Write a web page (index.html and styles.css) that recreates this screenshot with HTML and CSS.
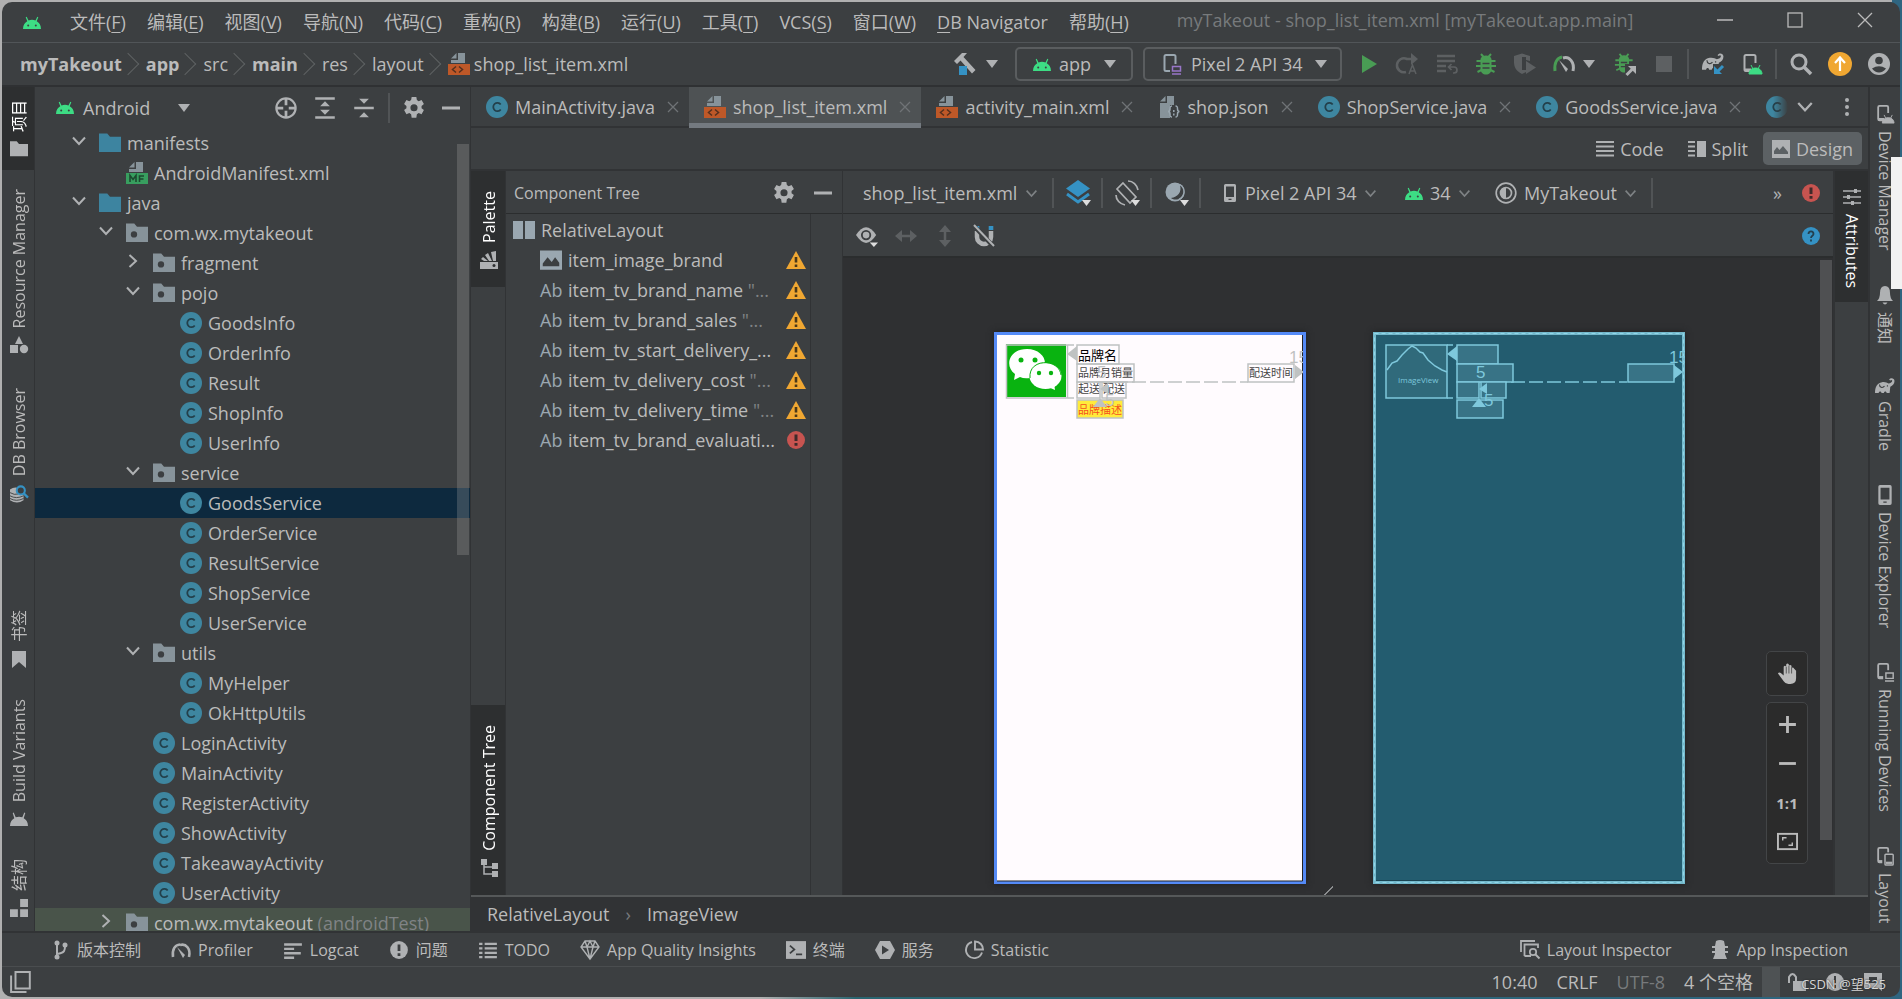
FILE: index.html
```html
<!DOCTYPE html>
<html lang="zh-CN">
<head>
  <meta charset="UTF-8">
  <meta name="viewport" content="width=device-width, initial-scale=1.0">
  <title>myTakeout - shop_list_item.xml [myTakeout.app.main]</title>
  <link rel="stylesheet" href="styles.css">
</head>
<body>
  <!-- icon sprite -->
  <svg class="sprite" aria-hidden="true">
    <symbol id="i-android" viewBox="0 0 18 13"><path fill="currentColor" d="M0 13c0-4 2-6.600 4.300-7.800L2.700 1.200l1-.5 1.800 3.800a9.500 9.500 0 0 1 7 0L14.300.7l1 .5-1.600 4C16 6.400 18 9 18 13z"/><circle cx="5.200" cy="9.500" r="1" fill="#3c3f41"/><circle cx="12.800" cy="9.500" r="1" fill="#3c3f41"/></symbol>
    <symbol id="i-folder" viewBox="0 0 16 16"><path fill="currentColor" d="M0 1h6l2 2.500h8V14.500H0z"/></symbol>
    <symbol id="i-package" viewBox="0 0 16 16"><path fill="#87939a" d="M0 1h6l2 2.500h8V14.500H0z"/><circle cx="5.800" cy="9" r="2.300" fill="#3c3f41"/></symbol>
    <symbol id="i-class" viewBox="0 0 16 16"><circle cx="8" cy="8" r="8" fill="#3e86a0"/><path d="M10.700 6.200A3 3 0 1 0 10.700 9.800" fill="none" stroke="#23404b" stroke-width="1.300"/></symbol>
    <symbol id="i-xml" viewBox="0 0 22 22"><path fill="#87939a" d="M10 0h7v10H3V7h7z"/><path fill="#87939a" d="M3 5.500 8.500 0v5.500z"/><path fill="#be5828" d="M0 11h22v11H0z"/><path d="M8 13.500 4.500 16.500 8 19.500M11 13.500l3.500 3L11 19.500" fill="none" stroke="#54301f" stroke-width="1.500"/></symbol>
    <symbol id="i-manifest" viewBox="0 0 22 22"><path fill="#87939a" d="M10 0h7v10H3V7h7z"/><path fill="#87939a" d="M3 5.500 8.500 0v5.500z"/><path fill="#389e5f" d="M0 11h22v11H0z"/><path d="M4 20v-6.500l3 4 3-4V20M13.500 20v-6h4.500M13.500 17h4" fill="none" stroke="#1d4a30" stroke-width="1.600"/></symbol>
    <symbol id="i-json" viewBox="0 0 22 22"><path fill="#87939a" d="M9 0h7v9h-4v13H2V7h7z"/><path fill="#87939a" d="M2 5.500 7.500 0v5.500z"/><path d="M14 10c-2 0-2 1-2 3s-1 2.500-2 2.500c1 0 2 .5 2 2.500s0 3 2 3M17.500 10c2 0 2 1 2 3s1 2.500 2 2.500c-1 0-2 .5-2 2.500s0 3-2 3M15.800 14v2M15.800 17.500v2" fill="none" stroke="#9aa7b0" stroke-width="1.500"/></symbol>
    <symbol id="i-down" viewBox="0 0 16 16"><path d="M2 4.500l6 6.500 6-6.500" fill="none" stroke="currentColor" stroke-width="2"/></symbol>
    <symbol id="i-tri" viewBox="0 0 12 8"><path d="M0 0h12L6 8z" fill="currentColor"/></symbol>
    <symbol id="i-close" viewBox="0 0 12 12"><path d="M1 1l10 10M11 1L1 11" stroke="currentColor" stroke-width="1.300"/></symbol>
    <symbol id="i-gear" viewBox="0 0 16 16"><path fill="currentColor" fill-rule="evenodd" d="M6.300 0h3.400l.4 2.200 1.300.8 2.100-.8 1.700 2.900-1.700 1.500v1.500l1.700 1.400-1.700 3-2.100-.8-1.300.8-.4 2.500H6.300l-.4-2.500-1.300-.8-2.100.8-1.700-3 1.700-1.400V6.600L.8 5.100l1.700-2.900 2.100.8 1.300-.8zM8 5.200a2.600 2.600 0 1 0 0 5.200 2.600 2.600 0 0 0 0-5.200z"/></symbol>
    <symbol id="i-minus" viewBox="0 0 16 16"><path d="M0 8h16" stroke="currentColor" stroke-width="2.500"/></symbol>
    <symbol id="i-target" viewBox="0 0 16 16"><circle cx="8" cy="8" r="7" fill="none" stroke="currentColor" stroke-width="1.600"/><path d="M8 1v5M8 10v5M1 8h5M10 8h5" stroke="currentColor" stroke-width="2"/></symbol>
    <symbol id="i-expand" viewBox="0 0 16 18"><path d="M0 1.200h16M0 16.800h16" stroke="currentColor" stroke-width="2"/><path d="M8 3.500l4 4H4zM8 14.500l4-4H4z" fill="currentColor"/></symbol>
    <symbol id="i-collapse" viewBox="0 0 16 18"><path d="M0 9h16" stroke="currentColor" stroke-width="2"/><path d="M8 5.500l4-4H4zM8 12.500l4 4H4z" fill="currentColor"/></symbol>
    <symbol id="i-warn" viewBox="0 0 20 18"><path d="M10 0l10 18H0z" fill="#f0a732"/><path d="M10 6v5.500M10 13.500v2.500" stroke="#4a3818" stroke-width="2.600"/></symbol>
    <symbol id="i-error" viewBox="0 0 18 18"><circle cx="9" cy="9" r="9" fill="#c75450"/><path d="M9 3.500v6.500M9 12v2.800" stroke="#3f2a2a" stroke-width="3"/></symbol>
    <symbol id="i-image" viewBox="0 0 16 16"><path fill="currentColor" fill-rule="evenodd" d="M0 1h16v14H0zM2 12.500h12v-2.500L11 6 8.500 9.500 5.500 6 2 10.500z"/></symbol>
    <symbol id="i-phone" viewBox="0 0 12 18"><path fill="currentColor" fill-rule="evenodd" d="M1.500 0h9q1.500 0 1.500 1.500v15q0 1.500-1.500 1.500h-9Q0 18 0 16.500v-15Q0 0 1.500 0zM2 2.500v10.500h8V2.500zM4.500 14.800v1.200h3v-1.200z"/></symbol>
    <symbol id="i-device" viewBox="0 0 20 22"><path d="M12 18H4q-1.500 0-1.500-1.500v-13Q2.500 2 4 2h8q1.500 0 1.500 1.500V10" fill="none" stroke="currentColor" stroke-width="2"/><path d="M3 17h6" stroke="currentColor" stroke-width="3"/></symbol>
    <symbol id="i-elephant" viewBox="0 0 20 16"><path fill="currentColor" d="M0 15C0 9 2 5 7 4.200c3-.5 5 .6 6.500 1.200 2-.2 3.700-1.400 3.700-2.700 0-.9-1.400-1-1.900-.1l-1.200-.8c1.600-2.700 5.300-1.600 5.400 1.200 0 3-1.900 4.700-4.200 5.700-.2 2-.5 4.300-.7 6.300h-3c0-2-2.500-2-2.700 0H6.500c-.2-2-2.600-2-2.800 0z"/><path d="M4.500 6.500c0 3 3 4 5 1.700M12 7.500l.8.800" fill="none" stroke="#3c3f41" stroke-width="1.100"/></symbol>
    <symbol id="i-bug" viewBox="0 0 20 22"><path d="M5 1l3 3.500M15 1l-3 3.500M0.500 8h19M0 13h20M1.500 19l4-2M18.500 19l-4-2" stroke="#499c54" stroke-width="2"/><path d="M4.500 6c1-2.800 3-3.500 5.500-3.500S14.500 3.200 15.500 6v10c0 3.500-2.500 5.500-5.500 5.500S4.500 19.500 4.500 16z" fill="#499c54"/><path d="M6.500 10.500h7M6.500 15h7" stroke="#3c3f41" stroke-width="1.500"/></symbol>
  </svg>

  <div class="window">
    <header class="menubar">
      <svg class="green android"><use href="#i-android"/></svg>
      <nav class="menus">
        <button>文件(<u>F</u>)</button>
        <button>编辑(<u>E</u>)</button>
        <button>视图(<u>V</u>)</button>
        <button>导航(<u>N</u>)</button>
        <button>代码(<u>C</u>)</button>
        <button>重构(<u>R</u>)</button>
        <button>构建(<u>B</u>)</button>
        <button>运行(<u>U</u>)</button>
        <button>工具(<u>T</u>)</button>
        <button>VCS(<u>S</u>)</button>
        <button>窗口(<u>W</u>)</button>
        <button><u>D</u>B Navigator</button>
        <button>帮助(<u>H</u>)</button>
      </nav>
      <div class="window-title">myTakeout - shop_list_item.xml [myTakeout.app.main]</div>
      <div class="window-buttons">
        <button aria-label="最小化"><svg viewBox="0 0 16 16"><path d="M0 8h16" stroke="currentColor" stroke-width="1.500"/></svg></button>
        <button aria-label="最大化"><svg viewBox="0 0 16 16"><rect x="1" y="1" width="14" height="14" fill="none" stroke="currentColor" stroke-width="1.300"/></svg></button>
        <button aria-label="关闭"><svg viewBox="0 0 16 16"><path d="M1 1l14 14M15 1L1 15" stroke="currentColor" stroke-width="1.300"/></svg></button>
      </div>
    </header>

    <div class="navbar">
      <div class="crumbs">
        <b>myTakeout</b><i></i><b>app</b><i></i><span>src</span><i></i><b>main</b><i></i><span>res</span><i></i><span>layout</span><i></i>
        <svg class="icon file"><use href="#i-xml"/></svg><span class="crumb-file">shop_list_item.xml</span>
      </div>
      <div class="run-bar">
        <button class="build" aria-label="构建">
          <svg class="icon" viewBox="0 0 22 22"><path d="M0 8L8 0h5L9.500 4l12 13-3.500 3.500L6.500 7.500 3 11z" fill="currentColor"/><path d="M5 13h8v9H5z" fill="#3592c4"/></svg>
          <svg class="tri"><use href="#i-tri"/></svg>
        </button>
        <div class="combo combo-app">
          <svg class="green android"><use href="#i-android"/></svg>
          <select aria-label="运行配置"><option>app</option></select>
          <svg class="tri"><use href="#i-tri"/></svg>
        </div>
        <div class="combo">
          <svg class="icon" viewBox="0 0 20 22"><path d="M8 18H4q-1.500 0-1.500-1.500v-13Q2.500 2 4 2h8q1.500 0 1.500 1.500V11" fill="none" stroke="#9aa7b0" stroke-width="2"/><path d="M10.500 13.500h8v4.500h-8zM10 21h9" fill="none" stroke="#9876c8" stroke-width="1.500"/></svg>
          <select aria-label="设备"><option>Pixel 2 API 34</option></select>
          <svg class="tri"><use href="#i-tri"/></svg>
        </div>
        <div class="run-icons">
          <button aria-label="运行"><svg viewBox="0 0 22 22"><path d="M4 2l15 9-15 9z" fill="#499c54"/></svg></button>
          <button class="off" aria-label="应用更改"><svg viewBox="0 0 22 22"><path d="M9 19A7 7 0 1 1 10 6h6" fill="none" stroke="currentColor" stroke-width="2.500"/><path d="M14 0l7 6-7 6z" fill="currentColor"/><path d="M12 21l3.500-9 3.500 9M13 18h5" fill="none" stroke="currentColor" stroke-width="1.500"/></svg></button>
          <button class="off" aria-label="应用代码更改"><svg viewBox="0 0 22 22"><path d="M1 3h18M1 8h18M1 13h9M1 18h9" stroke="currentColor" stroke-width="2.500"/><path d="M13 14h5a3 3 0 0 1 0 6h-1M15.500 11l-3 3 3 3" fill="none" stroke="currentColor" stroke-width="1.700"/></svg></button>
          <button aria-label="调试"><svg><use href="#i-bug"/></svg></button>
          <button class="off" aria-label="覆盖率"><svg viewBox="0 0 22 22"><path d="M0 3l8-2.500L16 3v5l-4-1v12l-4 2C2 18 0 14 0 9z" fill="currentColor"/><path d="M8 4h4v13H8z" fill="#3c3f41"/><path d="M12 8l10 6.500L12 21z" fill="currentColor"/></svg></button>
          <button aria-label="性能分析"><svg viewBox="0 0 22 18"><path d="M2 16C1 8 4 3 9 2" fill="none" stroke="#499c54" stroke-width="3"/><path d="M10 3c6-2 12 4 10 13" fill="none" stroke="currentColor" stroke-width="3"/><path d="M6 5l9 9-2 3z" fill="currentColor"/></svg></button>
          <svg class="tri"><use href="#i-tri"/></svg>
          <button aria-label="附加调试器"><svg viewBox="0 0 22 22"><use href="#i-bug" width="20" height="20"/><path d="M11 11h11v11H11z" fill="#3c3f41"/><path d="M14 13h8v8z" fill="currentColor"/><path d="M12.500 22l7-7" stroke="currentColor" stroke-width="3"/></svg></button>
          <button class="off" aria-label="停止"><svg viewBox="0 0 22 22"><path d="M3 3h16v16H3z" fill="currentColor"/></svg></button>
          <span class="bar"></span>
          <button aria-label="同步 Gradle"><svg viewBox="0 0 22 22"><use href="#i-elephant" width="22" height="18"/><path d="M11 11h11v11H11z" fill="#3c3f41"/><path d="M12 21v-8l8 8z" fill="#3592c4"/><path d="M14 20l7-7" stroke="#3592c4" stroke-width="3"/></svg></button>
          <button aria-label="设备管理器"><svg viewBox="0 0 20 22"><use href="#i-device"/><path d="M7 21c0-8 13-8 13 0zM9 12l2 4M18 12l-2 4" fill="#3ddc84" stroke="#3ddc84"/></svg></button>
          <span class="bar"></span>
          <button aria-label="搜索"><svg viewBox="0 0 22 22"><circle cx="9" cy="9" r="7" fill="none" stroke="currentColor" stroke-width="3"/><path d="M14 14l7 7" stroke="currentColor" stroke-width="3.500"/></svg></button>
          <button aria-label="更新"><svg class="big" viewBox="0 0 24 24"><circle cx="12" cy="12" r="12" fill="#f0a732"/><path d="M12 19V7M7 11l5-5.500 5 5.500" fill="none" stroke="#fff" stroke-width="2.200"/></svg></button>
          <button aria-label="账户"><svg viewBox="0 0 22 22"><circle cx="11" cy="11" r="11" fill="currentColor"/><circle cx="11" cy="7.500" r="3.800" fill="#3c3f41"/><path d="M4 15.500q7-4.500 14 0-3 4-7 4t-7-4z" fill="#3c3f41"/></svg></button>
        </div>
      </div>
    </div>

    <main class="main">
      <aside class="stripe stripe-left">
        <div class="stripe-group">
          <button class="active"><span>项目</span><svg><use href="#i-folder"/></svg></button>
          <button><span>Resource Manager</span><svg viewBox="0 0 18 18"><path d="M9 0l4 8H5zM0 9h8v8H0z" fill="currentColor"/><circle cx="14" cy="13" r="4.200" fill="currentColor"/></svg></button>
          <button><span>DB Browser</span><svg viewBox="0 0 20 20"><path d="M0 5q4-3 8-2v5l4 3h3v6q-7 5-15 0z" fill="currentColor"/><path d="M0 8.500q5 3 9 1.500M0 12q7 4 15 0M0 15q7 4 15 0" fill="none" stroke="#3c3f41"/><circle cx="12" cy="6" r="4.500" fill="#3c3f41" stroke="#3592c4" stroke-width="2.300"/><path d="M15 9l5 5" stroke="#3592c4" stroke-width="2.500"/></svg></button>
        </div>
        <div class="stripe-group">
          <button><span>书签</span><svg viewBox="0 0 16 18"><path d="M1 1h14v17l-7-6-7 6z" fill="currentColor"/></svg></button>
          <button><span>Build Variants</span><svg viewBox="0 0 18 14"><path d="M0 14c0-4 2-6.600 4.300-7.800L2.700 1l1-.5 2 4.800a9.500 9.500 0 0 1 6.600 0L14.300.5l1 .5-1.600 5.200C16 7.400 18 10 18 14z" fill="currentColor"/></svg></button>
          <button><span>结构</span><svg viewBox="0 0 16 16"><path d="M9 0h7v7H9zM0 9h7v7H0zM9 9h7v7H9z" fill="currentColor"/></svg></button>
        </div>
      </aside>

      <section class="project">
        <div class="project-head">
          <svg class="green android"><use href="#i-android"/></svg>
          <button class="project-view">Android <svg class="tri"><use href="#i-tri"/></svg></button>
          <div class="project-tools">
            <button aria-label="定位"><svg class="icon"><use href="#i-target"/></svg></button>
            <button aria-label="全部展开"><svg class="icon"><use href="#i-expand"/></svg></button>
            <button aria-label="全部折叠"><svg class="icon"><use href="#i-collapse"/></svg></button>
            <span class="bar"></span>
            <button aria-label="设置"><svg class="icon"><use href="#i-gear"/></svg></button>
            <button aria-label="隐藏"><svg class="icon small"><use href="#i-minus"/></svg></button>
          </div>
        </div>
        <div class="tree" id="tree"></div>
        <div class="scroll-thumb tree-thumb"></div>
      </section>

      <section class="editor">
        <div class="tabs">
          <div class="tab-list" id="tabs"></div>
          <button class="tab-more" aria-label="更多标签"><svg class="icon small"><use href="#i-down"/></svg></button>
          <button class="tab-more" aria-label="选项"><svg class="dots" viewBox="0 0 4 20"><circle cx="2" cy="3" r="2"/><circle cx="2" cy="10" r="2"/><circle cx="2" cy="17" r="2"/></svg></button>
        </div>
        <div class="modes">
          <button><svg viewBox="0 0 18 18"><path d="M0 2h18M0 6.500h18M0 11h18M0 15.500h18" stroke="currentColor" stroke-width="2"/></svg>Code</button>
          <button><svg viewBox="0 0 18 18"><path d="M0 2h7M0 6.500h7M0 11h7M0 15.500h7" stroke="currentColor" stroke-width="2"/><path d="M9 1h9v16H9z" fill="currentColor"/></svg>Split</button>
          <button class="active"><svg viewBox="0 0 18 18"><path d="M0 0h18v18H0z" fill="currentColor"/><path d="M2 14V11l3-4 2.500 3L11 6l5 6v2z" fill="#5c6164"/></svg>Design</button>
        </div>

        <div class="designer">
          <aside class="stripe stripe-palette">
            <button class="active"><span>Palette</span><svg viewBox="0 0 18 18"><path d="M0 11h18v7H0zM1 8l2-2 5 4H4zM5 4l3-2 4 8H9zM11 1l5-1v10h-3z" fill="currentColor"/><circle cx="14" cy="14.500" r="1.500" fill="#2d2f30"/></svg></button>
            <button class="active"><span>Component Tree</span><svg viewBox="0 0 18 18"><path d="M1 0h6v6H1zM12 4h6v6h-6zM12 12h6v6h-6z" fill="currentColor"/><path d="M4 4v11h9M4 8h9" fill="none" stroke="currentColor" stroke-width="1.500"/></svg></button>
          </aside>

          <div class="components">
            <div class="components-head">
              <span>Component Tree</span>
              <button aria-label="设置"><svg class="icon"><use href="#i-gear"/></svg></button>
              <button aria-label="隐藏"><svg class="icon small"><use href="#i-minus"/></svg></button>
            </div>
            <div class="component-list" id="components"></div>
          </div>

          <div class="surface">
            <div class="surface-bar">
              <div class="pick"><select aria-label="布局文件"><option>shop_list_item.xml</option></select><svg><use href="#i-down"/></svg></div>
              <span class="bar"></span>
              <button aria-label="图层"><svg viewBox="0 0 26 26"><path d="M13 0l12 8.500L13 17 1 8.500z" fill="#3592c4"/><path d="M2 14l11 8 11-8" fill="none" stroke="#3592c4" stroke-width="3"/><path d="M17 20h9l-4.500 6z" fill="#ddd"/></svg></button>
              <span class="bar"></span>
              <button aria-label="方向"><svg viewBox="0 0 26 26"><path d="M9 3l13 14-6 6L3 9z" fill="none" stroke="currentColor" stroke-width="1.700"/><path d="M14 1c5 0 9 4 10 9M2 15c0 5 4 9 9 10" fill="none" stroke="currentColor" stroke-width="1.700"/><path d="M17 20h9l-4.500 6z" fill="#ddd"/></svg></button>
              <span class="bar"></span>
              <button aria-label="夜间模式"><svg viewBox="0 0 26 26"><circle cx="12" cy="12" r="9.500" fill="#9aa7b0"/><path d="M17 5c2 7-2 12-9 13 5 4 13 0 13-6 0-3-2-6-4-7z" fill="#3c3f41"/><path d="M17 4.500c6 4 5 12-1 15" fill="none" stroke="#9aa7b0" stroke-width="1.500"/><path d="M17 20h9l-4.500 6z" fill="#ddd"/></svg></button>
              <span class="bar"></span>
              <div class="pick"><svg class="lead-phone"><use href="#i-phone"/></svg><select aria-label="预览设备"><option>Pixel 2 API 34</option></select><svg><use href="#i-down"/></svg></div>
              <div class="pick"><svg class="green android"><use href="#i-android"/></svg><select aria-label="API 版本"><option>34</option></select><svg><use href="#i-down"/></svg></div>
              <div class="pick theme"><svg class="icon" viewBox="0 0 22 22"><circle cx="11" cy="11" r="9.800" fill="none" stroke="currentColor" stroke-width="1.700"/><circle cx="11" cy="11" r="5.500" fill="none" stroke="currentColor" stroke-width="1.700"/><path d="M11 5.500v11a5.500 5.500 0 0 1 0-11z" fill="currentColor"/></svg><select aria-label="主题"><option>MyTakeout</option></select><svg><use href="#i-down"/></svg></div>
              <span class="bar"></span>
              <span class="more">»</span>
              <svg class="status-icon"><use href="#i-error"/></svg>
            </div>
            <div class="surface-bar second">
              <button aria-label="视图选项"><svg viewBox="0 0 24 24"><path d="M0 11q11-17 22 0-11 17-22 0z" fill="currentColor"/><circle cx="11" cy="11" r="4.600" fill="none" stroke="#3c3f41" stroke-width="2"/><path d="M15 19h9l-4.500 5z" fill="#ddd"/></svg></button>
              <button class="off" aria-label="水平"><svg viewBox="0 0 22 22"><path d="M5 11h12" stroke="currentColor" stroke-width="2.500"/><path d="M7 5v12l-7-6zM15 5v12l7-6z" fill="currentColor"/></svg></button>
              <button class="off" aria-label="垂直"><svg viewBox="0 0 22 22"><path d="M11 5v12" stroke="currentColor" stroke-width="2.500"/><path d="M5 7h12l-6-7zM5 15h12l-6 7z" fill="currentColor"/></svg></button>
              <button aria-label="自动连接"><svg viewBox="0 0 22 22"><path d="M4 6v6a7 7 0 0 0 14 0V6" fill="none" stroke="currentColor" stroke-width="4.500"/><path d="M15.700 1h4.600v4h-4.600zM1.700 1h4.600v4H1.700z" fill="#3592c4"/><path d="M0 0l21 22" stroke="#3c3f41" stroke-width="4.500"/><path d="M1 0l20 21" stroke="currentColor" stroke-width="2"/></svg></button>
              <svg class="status-icon help" viewBox="0 0 18 18"><circle cx="9" cy="9" r="9" fill="#3592c4"/><path d="M6.500 7c0-3.500 5-3.500 5 0 0 1.800-2.500 1.800-2.500 4M9 12.500v2" fill="none" stroke="#23404f" stroke-width="1.800"/></svg>
            </div>
            <div class="canvas">
              <!-- design preview -->
              <svg class="screen design" viewBox="0 0 312 552">
                <rect x="1.500" y="1.500" width="309" height="549" fill="#fffbfe" stroke="#548af7" stroke-width="3"/>
                <path d="M308.500 3v546H3" fill="none" stroke="#222"/>
                <rect x="12" y="12" width="60" height="53" fill="#09b310"/>
                <path fill="#fff" d="M33 17c11 0 18 7 18 14-9 1-16 7-15 15q-6 1-10-1l-6 3 1-6C10 34 15 17 33 17z"/>
                <ellipse cx="51.500" cy="44" rx="16" ry="13" fill="#fff"/><path d="M54 55l7 3-1-7z" fill="#fff"/>
                <path d="M36 46c-2-20 29-20 31-3" fill="none" stroke="#09b310" stroke-width="1"/>
                <g fill="#09b310"><circle cx="27" cy="28" r="2.500"/><circle cx="41" cy="28" r="2.500"/><circle cx="45" cy="41" r="2.200"/><circle cx="57" cy="41" r="2.200"/></g>
                <rect x="83" y="68" width="46" height="18" fill="#ffeb3b"/>
                <g class="design-text">
                  <text class="lg" x="84" y="28">品牌名</text>
                  <text x="84" y="45">品牌月销量</text>
                  <text x="84" y="61">起送</text>
                  <text x="109" y="61">配送</text>
                  <text class="hot" x="84" y="82">品牌描述</text>
                  <text x="255" y="45">配送时间</text>
                </g>
                <g fill="none" stroke="#bfc2c2" stroke-width="1.500">
                  <rect x="12.500" y="13" width="61" height="53"/>
                  <path d="M74 13h6M74 66h6M102 50h152" stroke-dasharray="14 4"/>
                  <rect x="83" y="13" width="42" height="19"/><rect x="83" y="32" width="57" height="18"/>
                  <rect x="83" y="50" width="23" height="16"/><rect x="108" y="50" width="24" height="16"/>
                  <rect x="83" y="68" width="46" height="18"/><rect x="254" y="32" width="46" height="18"/>
                </g>
                <g fill="#bfc2c2"><path d="M73 22l10-8v15zM106 57l8-6v11zM99 75l7-9 7 9zM301 33l9 7-9 7z"/>
                  <text class="gap" x="103" y="46">5</text><text class="gap" x="111" y="74">5</text><text class="gap" x="295" y="31">15</text></g>
                <path d="M310.500 0v552" stroke="#548af7" stroke-width="3"/>
              </svg>
              <!-- blueprint preview -->
              <svg class="screen blueprint" viewBox="0 0 312 552">
                <rect x="1.500" y="1.500" width="309" height="549" fill="#235c6f" stroke="#74b9cc" stroke-width="3"/>
                <rect x="1.500" y="1.500" width="309" height="549" fill="none" stroke="#91d6e8" stroke-dasharray="4 3"/>
                <path d="M3 548.500h306" stroke="#1a4554"/>
                <g fill="#387386" stroke="#7ec8dc" stroke-width="1.500">
                  <rect x="13" y="13" width="61" height="53" fill="#306a7b"/>
                  <path d="M14 38l5-7 5-2 5-6 6-6 4-3 4 2 4 4 3 1 5 7 7 6 7 4 5 2"  fill="none"/>
                  <path d="M74 13h6M74 66h6M102 50h152" stroke-dasharray="14 4"/>
                  <rect x="84" y="13" width="41" height="19"/><rect x="84" y="32" width="56" height="18"/>
                  <rect x="84" y="50" width="22" height="16"/><rect x="108" y="50" width="25" height="16"/>
                  <rect x="84" y="68" width="46" height="18"/><rect x="255" y="32" width="46" height="18"/>
                </g>
                <g fill="#7ec8dc"><path d="M74 22l10-8v15zM106 57l8-6v11zM99 75l7-9 7 9zM301 33l9 7-9 7z"/>
                  <text class="tiny" x="25" y="51">ImageView</text>
                  <text class="gap" x="103" y="46">5</text><text class="gap" x="111" y="74">5</text><text class="gap" x="296" y="31">15</text></g>
              </svg>
              <div class="resize-grip"></div>
              <div class="zoom">
                <div class="zoom-box"><button aria-label="平移"><svg viewBox="0 0 20 22"><path d="M6 13V4q1.300-2 2.600 0V1.500q1.400-2 2.800 0V3q1.500-2 2.800 0v2.500q1.400-2 2.800.5L19 8v8q0 6-6 6h-2q-3 0-5-3l-6-8q1-2 3-.5z" fill="currentColor"/><path d="M8.700 4v7M11.500 3v8M14.300 5v6" stroke="#2b2b2b" stroke-width=".7"/></svg></button></div>
                <div class="zoom-box">
                  <button aria-label="放大"><svg viewBox="0 0 20 20"><path d="M2 10h16M10 2v16" stroke="currentColor" stroke-width="2.700"/></svg></button>
                  <button aria-label="缩小"><svg viewBox="0 0 20 20"><path d="M2 10h16" stroke="currentColor" stroke-width="2.700"/></svg></button>
                  <button>1:1</button>
                  <button aria-label="适应屏幕"><svg viewBox="0 0 22 20"><rect x="1" y="2" width="20" height="16" fill="none" stroke="currentColor" stroke-width="2"/><path d="M6 9V6h4M16 11v3h-4" fill="none" stroke="currentColor" stroke-width="1.500"/></svg></button>
                </div>
              </div>
              <div class="scroll-thumb canvas-thumb"></div>
            </div>
          </div>

          <aside class="stripe stripe-attributes">
            <button class="active"><svg viewBox="0 0 18 18"><path d="M0 3h18M0 9h18M0 15h18" stroke="currentColor" stroke-width="1.700"/><path d="M11 1h3v4h-3zM4 7h3v4H4zM8 13h3v4H8z" fill="currentColor"/></svg><span>Attributes</span></button>
          </aside>
        </div>
        <div class="path-bar"><span>RelativeLayout</span><i>›</i><span>ImageView</span></div>
      </section>

      <aside class="stripe stripe-right">
        <button><svg viewBox="0 0 20 22"><use href="#i-device"/><path d="M7 21c0-8 13-8 13 0zM9 12l2 4M18 12l-2 4" fill="currentColor" stroke="currentColor"/></svg><span>Device Manager</span></button>
        <button><svg viewBox="0 0 18 20"><path d="M1 16q3-3 3-8 0-7 5-7t5 7q0 5 3 8zM6.500 17.500h5q-2.500 4-5 0z" fill="currentColor"/></svg><span>通知</span></button>
        <button><svg class="flat"><use href="#i-elephant"/></svg><span>Gradle</span></button>
        <button><svg><use href="#i-phone"/></svg><span>Device Explorer</span></button>
        <button><svg viewBox="0 0 20 22"><use href="#i-device"/><path d="M8 9h12v13H8z" fill="#3c3f41"/><path d="M11 12h8v6h-8zM10 21h10" fill="none" stroke="currentColor" stroke-width="1.600"/></svg><span>Running Devices</span></button>
        <button><svg viewBox="0 0 20 22"><use href="#i-device"/><path d="M7 7h13v15H7z" fill="#3c3f41"/><rect x="10" y="9" width="9" height="12" rx="1" fill="none" stroke="currentColor" stroke-width="1.600"/><path d="M11 18.500h7" stroke="currentColor" stroke-width="2.500"/></svg><span>Layout</span></button>
      </aside>
    </main>

    <div class="toolstrip">
      <button><svg viewBox="0 0 18 20"><path d="M6 3v14M6 14c8-1 8-4 8-8" fill="none" stroke="currentColor" stroke-width="2"/><circle cx="6" cy="3" r="2.500"/><circle cx="6" cy="17" r="2.500"/><circle cx="14" cy="5" r="2.500"/></svg>版本控制</button>
      <button><svg viewBox="0 0 20 18"><path d="M2 16C1 8 4 4 9 3.500M9 4c6-2 11 4 9 12" fill="none" stroke="currentColor" stroke-width="2.600"/><path d="M6 6l8 8-2 3z"/></svg>Profiler</button>
      <button><svg viewBox="0 0 18 18"><path d="M1 4h16M1 8h9M1 12h15M1 16h9" stroke="currentColor" stroke-width="2.200"/></svg>Logcat</button>
      <button><svg viewBox="0 0 18 18"><circle cx="9" cy="9" r="8"/><path d="M9 4v6M9 12v2.500" stroke="#3c3f41" stroke-width="2.500"/></svg>问题</button>
      <button><svg viewBox="0 0 18 18"><path d="M1 3.500h3M1 7.500h3M1 11.500h3M1 15.500h3M6 3.500h11M6 7.500h11M6 11.500h11M6 15.500h11" stroke="currentColor" stroke-width="2"/></svg>TODO</button>
      <button><svg viewBox="0 0 20 20"><path d="M5 1h10l4 6-9 12L1 7zM1 7h18M5 1l2 6 3 12 3-12 2-6M7 7l3-6 3 6" fill="none" stroke="currentColor" stroke-width="1.400"/></svg>App Quality Insights</button>
      <button><svg viewBox="0 0 18 18"><path d="M0 1h18v16H0z"/><path d="M3.500 5l4 3.500-4 3.500M9 13h5.500" fill="none" stroke="#3c3f41" stroke-width="1.600"/></svg>终端</button>
      <button><svg viewBox="0 0 20 18"><path d="M5 0h10l5 9-5 9H5L0 9z"/><path d="M7 4.500l7 4.500-7 4.500z" fill="#3c3f41"/></svg>服务</button>
      <button><svg viewBox="0 0 20 20"><path d="M8 2a8.200 8.200 0 1 0 10 10.500M11 1.500c5 0 8 4 8 8h-8z" fill="none" stroke="currentColor" stroke-width="1.900"/></svg>Statistic</button>
      <span class="fill"></span>
      <button class="right"><svg viewBox="0 0 20 20"><path d="M1 12V1h14M4.500 16V4.500H18V8M11 16H4.500" fill="none" stroke="currentColor" stroke-width="1.800"/><circle cx="13" cy="12" r="3.200" fill="none" stroke="currentColor" stroke-width="1.700"/><path d="M15 14l4.500 4.500" stroke="currentColor" stroke-width="2"/></svg>Layout Inspector</button>
      <button class="right"><svg viewBox="0 0 20 20"><path d="M6 1q4-2 8 0l1 5v8l2 5H3l2-5V6z"/><path d="M2 7h16M2 12h16" stroke="currentColor" stroke-width="1.800"/></svg>App Inspection</button>
    </div>

    <footer class="statusbar">
      <button aria-label="工具窗口"><svg class="icon" viewBox="0 0 20 20"><path d="M5 1h13v15H5zM1 4v15h14" fill="none" stroke="currentColor" stroke-width="1.800"/></svg></button>
      <span class="fill"></span>
      <span>10:40</span><span>CRLF</span><span class="dim">UTF-8</span><span>4 个空格</span>
      <div class="memory"></div>
      <div class="status-icons">
        <svg viewBox="0 0 20 20"><path d="M2 11V5q3.500-6 7 0v4" fill="none" stroke="currentColor" stroke-width="2"/><path d="M6 9h13v10H6z" fill="currentColor"/></svg>
        <svg viewBox="0 0 20 20"><circle cx="10" cy="10" r="9" fill="currentColor"/><path d="M10 4v7M10 13v3" stroke="#3c3f41" stroke-width="2"/></svg>
        <svg viewBox="0 0 20 20"><path d="M1 1h18v18l-4-3H1z" fill="currentColor"/><path d="M6 5h8v6H6z" fill="#3c3f41"/></svg>
        <span class="watermark">CSDN @望525</span>
      </div>
    </footer>
  </div>
  <div class="edge-panel"></div>

  <script>
    // [level, icon, name, arrow, note]
    const treeData = [
      [1, "folder", "manifests", "open"],
      [2, "manifest", "AndroidManifest.xml"],
      [1, "folder", "java", "open"],
      [2, "package", "com.wx.mytakeout", "open"],
      [3, "package", "fragment", "closed"],
      [3, "package", "pojo", "open"],
      [4, "class", "GoodsInfo"],
      [4, "class", "OrderInfo"],
      [4, "class", "Result"],
      [4, "class", "ShopInfo"],
      [4, "class", "UserInfo"],
      [3, "package", "service", "open"],
      [4, "class", "GoodsService"],
      [4, "class", "OrderService"],
      [4, "class", "ResultService"],
      [4, "class", "ShopService"],
      [4, "class", "UserService"],
      [3, "package", "utils", "open"],
      [4, "class", "MyHelper"],
      [4, "class", "OkHttpUtils"],
      [3, "class", "LoginActivity"],
      [3, "class", "MainActivity"],
      [3, "class", "RegisterActivity"],
      [3, "class", "ShowActivity"],
      [3, "class", "TakeawayActivity"],
      [3, "class", "UserActivity"],
      [2, "package", "com.wx.mytakeout", "closed", "(androidTest)"]
    ];

    const tabData = [
      ["class", "MainActivity.java"],
      ["xml", "shop_list_item.xml"],
      ["xml", "activity_main.xml"],
      ["json", "shop.json"],
      ["class", "ShopService.java"],
      ["class", "GoodsService.java"]
    ];

    const componentData = [
      ["image", "item_image_brand", "", "warn"],
      ["Ab", "item_tv_brand_name", "\"...", "warn"],
      ["Ab", "item_tv_brand_sales", "\"...", "warn"],
      ["Ab", "item_tv_start_delivery_...", "", "warn"],
      ["Ab", "item_tv_delivery_cost", "\"...", "warn"],
      ["Ab", "item_tv_delivery_time", "\"...", "warn"],
      ["Ab", "item_tv_brand_evaluati...", "", "error"]
    ];

    const icon = (name, cls = "") => `<svg class="icon ${cls}"><use href="#i-${name}"/></svg>`;

    document.getElementById("tree").innerHTML = treeData.map(([level, type, name, arrow, note]) => `
      <div class="row level-${level} ${name === "GoodsService" ? "selected" : ""} ${note ? "test" : ""}">
        <span class="arrow ${arrow || ""}">${arrow ? icon("down") : ""}</span>
        ${icon(type, type)}
        <span>${name}${note ? ` <em>${note}</em>` : ""}</span>
      </div>`).join("");

    document.getElementById("tabs").innerHTML = tabData.map(([type, name]) => `
      <div class="tab ${name === "shop_list_item.xml" ? "active" : ""}">
        ${icon(type, type)}<span>${name}</span>
        <button aria-label="关闭 ${name}"><svg><use href="#i-close"/></svg></button>
      </div>`).join("") + `<div class="tab cut">${icon("class")}</div>`;

    document.getElementById("components").innerHTML = `
      <div class="row root">
        <svg class="icon" viewBox="0 0 22 18"><path d="M0 0h10v18H0zM12 0h10v18H12z" fill="#9aa7b0"/></svg>
        <span>RelativeLayout</span>
      </div>` + componentData.map(([type, name, note, state]) => `
      <div class="row">
        ${type === "Ab" ? `<span class="ab">Ab</span>` : icon("image", "image")}
        <span class="name">${name}${note ? ` <em>${note}</em>` : ""}</span>
        ${icon(state, "state")}
      </div>`).join("");
  </script>
</body>
</html>
```

FILE: styles.css
```css
* { box-sizing: border-box; }

body {
  margin: 0;
  padding: 2px;
  height: 100vh;
  overflow: hidden;
  position: relative;
  font-family: "Open Sans", "Noto Sans CJK SC", sans-serif;
  font-size: 18px;
  line-height: 24px;
  color: #bbbbbb;
  background: linear-gradient(90deg, #b0b0b0 0 40%, #2a6570 45%, #2f6580);
}

body::before {
  content: "";
  position: absolute;
  top: 0; left: 0; right: 10px;
  height: 2px;
  background: #b0b0b0;
}

button, select {
  font: inherit;
  color: inherit;
  background: none;
  border: none;
  padding: 0;
  margin: 0;
  white-space: nowrap;
}

select { appearance: none; outline: none; }
em, i { font-style: normal; }
svg { display: block; flex: none; overflow: visible; }
u { text-underline-offset: 3px; text-decoration-thickness: 1px; }

.sprite { position: absolute; width: 0; height: 0; }
.icon { width: 22px; height: 22px; color: #afb1b3; }
.icon.small { width: 18px; height: 18px; }
.android { width: 18px; height: 13px; }
.green { color: #3ddc84; }
.tri { width: 12px; height: 8px; color: #afb1b3; }
.off { color: #5d6062; }
.fill { flex: 1; }
.bar { width: 2px; height: 30px; background: #515456; }

.window {
  height: 100%;
  display: flex;
  flex-direction: column;
  background: #3c3f41;
  border-radius: 10px;
  overflow: hidden;
  position: relative;
}

/* menu */
.menubar {
  height: 41px;
  display: flex;
  align-items: center;
  padding-left: 21px;
  border-bottom: 1px solid #515558;
}
.menus { display: flex; gap: 21px; margin-left: 29px; }
.window-title { margin-left: 48px; padding-bottom: 4px; color: #777a7c; white-space: nowrap; }
.window-buttons { margin-left: auto; display: flex; }
.window-buttons button { width: 70px; display: flex; justify-content: center; padding-bottom: 4px; }
.window-buttons svg { width: 16px; height: 16px; }

/* navigation bar */
.navbar {
  height: 44px;
  display: flex;
  align-items: center;
  justify-content: space-between;
  border-bottom: 2px solid #2f3133;
}
.crumbs { display: flex; align-items: center; padding-left: 18px; }
.crumbs i {
  width: 16px;
  height: 16px;
  margin: 0 10px 0 -2px;
  border: solid #5e6163;
  border-width: 1px 1px 0 0;
  transform: rotate(45deg);
}
.crumbs .file { margin-right: 4px; }
.run-bar { display: flex; align-items: center; gap: 10px; }
.build { display: flex; align-items: center; gap: 10px; margin-right: 7px; }
.combo {
  height: 34px;
  display: flex;
  align-items: center;
  gap: 8px;
  padding: 0 13px 0 16px;
  border: 2px solid #5a5d5f;
  border-radius: 5px;
}
.combo .tri { margin-left: 4px; }
.combo-app { padding-right: 15px; }
.run-icons { display: flex; align-items: center; color: #afb1b3; margin: 0 2px 0 -3px; }
.run-icons button { width: 39px; height: 30px; display: flex; align-items: center; justify-content: center; }
.run-icons svg { width: 22px; height: 22px; }
.run-icons svg.big { width: 24px; height: 24px; }
.run-icons .tri { width: 12px; height: 8px; margin: 0 10px 0 0; }
.run-icons .bar { margin: 0 4px; }

.main { flex: 1; min-height: 0; display: flex; }

/* tool window stripes */
.stripe {
  flex: none;
  display: flex;
  flex-direction: column;
  font-size: 16px;
  line-height: 20px;
}
.stripe button { display: flex; flex-direction: column; align-items: center; gap: 8px; flex: none; }
.stripe button span { writing-mode: vertical-rl; text-orientation: sideways; }
.stripe button svg { width: 18px; height: 18px; color: #afb1b3; }
.stripe .active { background: #2d2f30; color: #ffffff; }
.stripe-left button span, .stripe-palette button span { transform: rotate(180deg); }

.stripe-left {
  width: 33px;
  justify-content: space-between;
  border-right: 1px solid #313335;
}
.stripe-left button, .stripe-palette button { padding-left: 2px; }
.stripe-group { display: flex; flex-direction: column; gap: 34px; }
.stripe-group:last-child { padding-bottom: 14px; gap: 31px; }
.stripe-left .active { padding: 13px 0 12px 2px; margin-bottom: -15px; }

.stripe-palette { width: 35px; justify-content: space-between; border-right: 1px solid #313335; }
.stripe-palette button { padding-top: 20px; padding-bottom: 18px; }
.stripe-attributes { width: 35px; border: solid #313335; border-width: 0 0 0 2px; }
.stripe-attributes button { padding: 17px 0 14px; }
.stripe-right {
  width: 32px;
  gap: 34px;
  padding-top: 17px;
  border-left: 2px solid #313335;
  overflow: hidden;
}
.stripe-right button { gap: 7px; }
.stripe-right button svg { width: 20px; height: 20px; }
.stripe-right button svg.flat { height: 16px; }

/* project view */
.project { width: 436px; position: relative; border-right: 1px solid #313335; display: flex; flex-direction: column; }
.project-head { height: 41px; flex: none; display: flex; align-items: center; padding: 0 10px 0 21px; }
.project-view { display: flex; align-items: center; gap: 28px; margin-left: 9px; }
.project-tools { display: flex; align-items: center; gap: 17px; margin-left: auto; }
.project-tools .bar { height: 30px; margin: 0 -4px; }
.tree { flex: 1; min-height: 0; overflow: hidden; }
.row { height: 30px; display: flex; align-items: center; white-space: nowrap; }
.row em { color: #808385; }
.tree .row { gap: 6px; }
.level-1 { padding-left: 36px; }
.level-2 { padding-left: 63px; }
.level-3 { padding-left: 90px; }
.level-4 { padding-left: 117px; }
.arrow { width: 22px; height: 22px; }
.arrow .icon { width: 16px; height: 16px; margin-top: 1px; }
.arrow.closed .icon { transform: rotate(-90deg); }
.icon.folder { color: #3d84a0; }
.selected { background: #0d293e; }
.test { background: #49544a; }
.scroll-thumb { position: absolute; width: 12px; background: rgba(166, 166, 166, 0.28); }
.tree-thumb { right: 1px; top: 57px; height: 411px; }

/* editor */
.editor { flex: 1; min-width: 0; display: flex; flex-direction: column; }
.tabs { height: 41px; display: flex; border-bottom: 2px solid #313335; }
.tab-list { flex: 1; min-width: 0; display: flex; }
.tab { height: 41px; display: flex; align-items: center; gap: 7px; padding: 0 10px 2px 15px; white-space: nowrap; }
.tab button { margin-left: 5px; color: #6f7376; }
.tab button svg { width: 12px; height: 12px; }
.tab.active { background: #4e5254; box-shadow: inset 0 -5px #747a80; }
.tab.cut { padding-right: 0; -webkit-mask-image: linear-gradient(90deg, #000 60%, transparent); }
.tab-more { width: 42px; display: flex; align-items: center; justify-content: center; }
.dots { width: 4px; height: 20px; fill: #afb1b3; }

.modes {
  height: 43px;
  display: flex;
  justify-content: flex-end;
  align-items: center;
  gap: 6px;
  padding-right: 6px;
  border-bottom: 2px solid #313335;
}
.modes button { height: 33px; display: flex; align-items: center; gap: 6px; padding: 0 9px; border-radius: 5px; }
.modes svg { width: 18px; height: 18px; color: #afb1b3; }
.modes .active { background: #5c6164; }

.designer { flex: 1; min-height: 0; display: flex; }
.components { width: 337px; flex: none; border-right: 1px solid #313335; display: flex; flex-direction: column; }
.components-head {
  height: 43px;
  display: flex;
  align-items: center;
  gap: 19px;
  padding: 2px 10px 0 8px;
  font-size: 16px;
  border-bottom: 1px solid #2b2d2e;
}
.components-head span { flex: 1; }
.component-list { flex: 1; width: 305px; padding-top: 1px; border-right: 1px solid #313335; }
.component-list .row { gap: 6px; padding: 0 4px 0 34px; }
.component-list .row.root { padding-left: 7px; }
.component-list .root .icon { height: 18px; }
.component-list .name { flex: 1; }
.component-list .state { width: 20px; height: 18px; }
.component-list .image { color: #9aa7b0; }
.ab { width: 22px; color: #9aa7b0; }

.surface { flex: 1; min-width: 0; display: flex; flex-direction: column; }
.surface-bar {
  height: 43px;
  flex: none;
  display: flex;
  align-items: center;
  padding: 2px 13px 0 20px;
  border-bottom: 1px solid #2b2d2e;
}
.surface-bar > button { width: 47px; display: flex; justify-content: center; color: #afb1b3; }
.surface-bar > button svg { width: 26px; height: 26px; }
.pick { display: flex; align-items: center; gap: 7px; }
.pick > svg:last-child { width: 13px; height: 13px; color: #7e8284; margin-right: 14px; }
.pick + .pick { margin-left: 14px; }
.pick + .theme { margin-left: 10px; }
.pick .lead-phone { width: 12px; height: 18px; color: #afb1b3; margin: 0 2px 0 23px; }
.more { margin-left: auto; color: #afb1b3; margin-right: 20px; }
.status-icon { width: 18px; height: 18px; }
.help { margin-left: auto; }
.surface-bar.second { height: 44px; padding-left: 4px; border-bottom-width: 2px; }
.surface-bar.second > button { width: 39px; color: #afb1b3; }
.surface-bar.second > button.off { color: #5d6062; }
.surface-bar.second > button svg { width: 22px; height: 22px; }

.canvas {
  flex: 1;
  min-height: 0;
  position: relative;
  display: flex;
  gap: 67px;
  padding: 74px 0 0 151px;
  background: #2f3032;
  overflow: hidden;
}
.screen { width: 312px; height: 552px; overflow: hidden; box-shadow: 0 0 6px #1e1f20; }
.design-text { font-size: 11px; fill: #444; }
.design-text .lg { font-size: 13px; fill: #000; }
.design-text .hot { fill: #f4511e; }
.gap { font-family: "Liberation Sans", sans-serif; font-size: 17px; }
.tiny { font-size: 8px; }
.canvas-thumb { right: 1px; top: 2px; height: 580px; background: #4f5052; }
.resize-grip {
  position: absolute;
  left: 476px;
  bottom: -5px;
  width: 14px;
  height: 14px;
  background: linear-gradient(135deg, transparent 48%, #8a8c8e 48% 54%, transparent 54%);
}
.zoom { position: absolute; right: 25px; bottom: 31px; display: flex; flex-direction: column; gap: 6px; }
.zoom-box {
  width: 42px;
  padding: 2px 0;
  display: flex;
  flex-direction: column;
  background: #2b2b2b;
  border: 1px solid #434547;
  border-radius: 5px;
}
.zoom-box button { height: 39px; display: flex; align-items: center; justify-content: center; font-size: 15px; font-weight: 700; color: #bbbbbb; }
.zoom-box svg { width: 21px; height: 21px; }

.path-bar {
  height: 36px;
  flex: none;
  display: flex;
  align-items: center;
  gap: 16px;
  padding-left: 16px;
  background: #313335;
  border-top: 2px solid #555859;
}
.path-bar i { color: #777a7c; }

/* bottom bars */
.toolstrip {
  height: 35px;
  flex: none;
  display: flex;
  align-items: center;
  gap: 30px;
  padding: 1px 52px 0 48px;
  font-size: 16px;
  border-top: 2px solid #313335;
}
.toolstrip button { display: flex; align-items: center; gap: 7px; }
.toolstrip svg { width: 20px; height: 20px; color: #afb1b3; fill: currentColor; }
.toolstrip .right + .right { margin-left: 8px; }

.statusbar {
  height: 31px;
  flex: none;
  display: flex;
  align-items: center;
  gap: 19px;
  padding-left: 8px;
  border-top: 1px solid #4a4d4f;
}
.dim { color: #777a7c; }
.memory { width: 18px; height: 30px; margin-left: -10px; background: #4e5254; }
.status-icons { display: flex; gap: 18px; position: relative; padding-right: 17px; margin-left: -12px; color: #afb1b3; }
.status-icons svg { width: 20px; height: 20px; }
.watermark {
  position: absolute;
  right: 14px;
  top: 0;
  font-size: 13px;
  color: #d6d6d6;
  text-shadow: 0 0 2px #222;
  white-space: nowrap;
}

.edge-panel {
  position: absolute;
  right: 0;
  top: 157px;
  width: 11px;
  height: 132px;
  background: #f2f2f2;
}
```
